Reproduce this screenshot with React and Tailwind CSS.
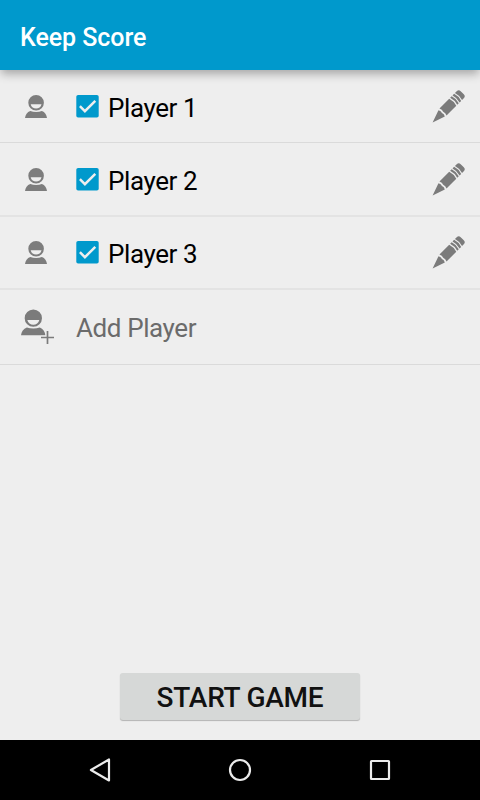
import React from 'react';

const players = ['Player 1', 'Player 2', 'Player 3'];

const PersonShape = () => (
  <>
    <path
      fillRule="evenodd"
      d="M11.1 0a7.8 7.7 0 1 1 0 15.4a7.8 7.7 0 0 1 0-15.4zM5.7 9.3c0.6 2.9 2.8 4.3 5.4 4.3s4.8-1.4 5.4-4.3z"
    />
    <path d="M0 23c0.4-3.2 2.1-5.8 5.3-6.9c1.8 0.7 3.7 1 5.8 1s4-0.3 5.8-1c3 1.1 4.7 3.7 5.1 6.9z" />
  </>
);

const PersonIcon = () => (
  <svg className="h-[23px] w-[22px] fill-[#7d7d7d]" viewBox="0 0 22 23">
    <PersonShape />
  </svg>
);

const AddPersonIcon = () => (
  <svg className="h-[36px] w-[36px] fill-[#7b7b7b]" viewBox="0 0 36 36">
    <g transform="translate(1 0.6) scale(1.11)">
      <PersonShape />
    </g>
    <path d="M21 28.5h13M27.5 22v13" stroke="#eeeeee" strokeWidth="3.6" />
    <path d="M21 28.5h13M27.5 22v13" stroke="#7b7b7b" strokeWidth="1.7" />
  </svg>
);

const PencilIcon = () => (
  <svg className="h-[34px] w-[34px] fill-[#7b7b7b]" viewBox="0 0 34 34">
    <g transform="translate(0.6 33.4) rotate(-45)">
      <path d="M0 0L12.8-4.5Q14.2-2.2 13.2 0Q14.2 2.2 12.8 4.5z" />
      <path d="M14.7-5H28.5Q30.2 0 28.5 5H14.7Q16 2.4 15 0Q16-2.4 14.7-5z" />
      <path d="M29.8-5h2.2q1.7 5 0 10h-2.2q1.7-5 0-10z" />
      <path d="M33.2-5h2.2q1.7 5 0 10h-2.2q1.7-5 0-10z" />
      <path d="M36.6-5h2.5q2.8 0 2.8 2.8v4.4q0 2.8-2.8 2.8h-2.5q1.7-5 0-10z" />
    </g>
  </svg>
);

const Checkbox = () => (
  <svg className="h-[23px] w-[23px]" viewBox="0 0 23 23">
    <rect x="0.3" y="0" width="22.4" height="22.5" rx="1.8" fill="#0099cc" />
    <path d="M3.9 11.2l5 5L19.3 5.8" fill="none" stroke="#eeeeee" strokeWidth="2.5" />
  </svg>
);

const PlayerRow = ({ name }) => (
  <div className="flex h-[73px] items-center border-b border-[#e3e3e3] pr-[14px] pl-[25px] shadow-[0_1px_0_#e3e3e3] first:border-[#dadada] first:shadow-none">
    <PersonIcon />
    <div className="ml-[29px]">
      <Checkbox />
    </div>
    <span className="ml-[9px] flex-1 pt-[4px] text-[26px] leading-[30px] tracking-[-0.4px] text-black">
      {name}
    </span>
    <PencilIcon />
  </div>
);

const NavigationBar = () => (
  <div className="flex h-[60px] items-center justify-center gap-[104px] bg-black">
    <svg className="size-9" viewBox="0 0 36 36" fill="none" stroke="#ececec" strokeWidth="2.2">
      <path d="M27 7.5v21L8.9 18z" strokeLinejoin="round" />
    </svg>
    <svg className="size-9" viewBox="0 0 36 36" fill="none" stroke="#ececec" strokeWidth="2.2">
      <circle cx="18" cy="18" r="10" />
    </svg>
    <svg className="size-9" viewBox="0 0 36 36" fill="none" stroke="#ececec" strokeWidth="2.2">
      <rect x="9" y="9" width="18" height="18" rx="0.5" />
    </svg>
  </div>
);

const App = () => {
  return (
    <div className="flex h-[800px] w-[480px] flex-col overflow-hidden bg-[#eeeeee] font-[Roboto,sans-serif]">
      <header className="z-10 flex h-[70px] shrink-0 items-center bg-[#0099cc] px-5 pt-[5px] shadow-[0_5px_9px_-1px_rgba(0,0,0,0.3)]">
        <h1 className="text-[25px] font-medium tracking-[-0.05px] text-white">Keep Score</h1>
      </header>
      <main className="flex flex-1 flex-col">
        {players.map((name) => (
          <PlayerRow key={name} name={name} />
        ))}
        <div className="flex h-[76px] items-center border-b border-[#dadada] pt-px pl-5">
          <AddPersonIcon />
          <span className="ml-5 pt-px text-[26px] leading-[30px] tracking-[-0.4px] text-[#6b6b6b]">
            Add Player
          </span>
        </div>
        <button className="mx-auto mt-auto mb-[20px] h-[47px] w-[240px] rounded-[3px] bg-[#d6d8d7] pt-[3px] text-[28px] leading-[32px] font-medium tracking-[-0.25px] text-[#111111] shadow-[0_1px_1px_rgba(0,0,0,0.25)]">
          START GAME
        </button>
      </main>
      <NavigationBar />
    </div>
  );
};

export default App;
